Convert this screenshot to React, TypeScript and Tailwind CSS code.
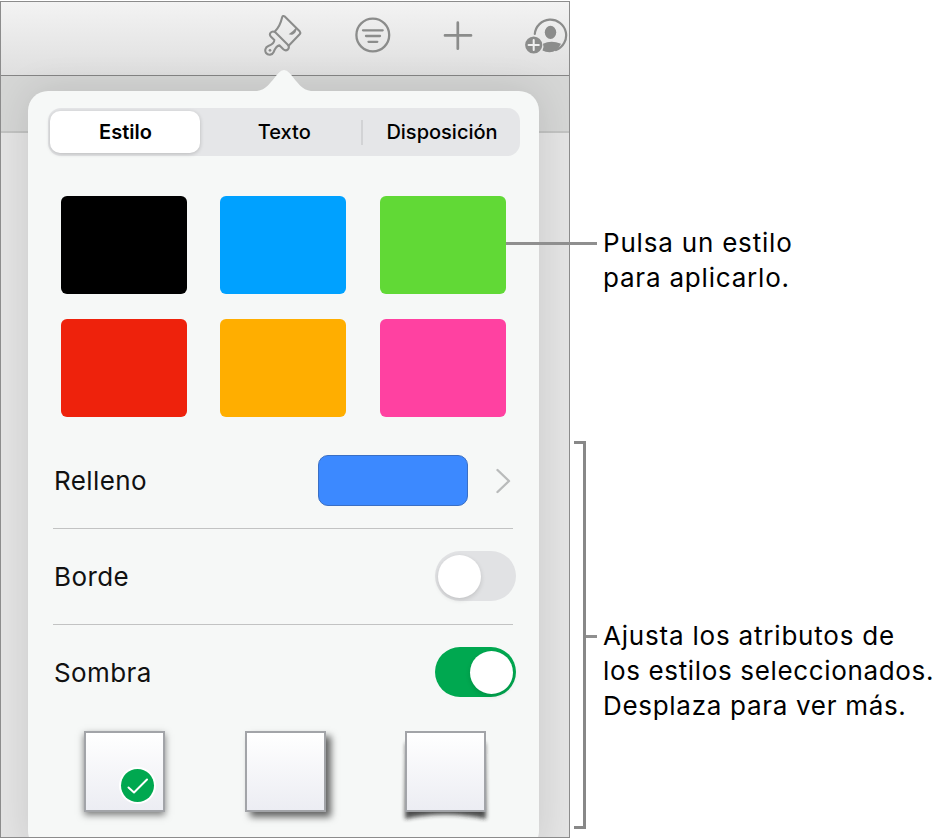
import type { ReactNode } from 'react';

const swatches = ['bg-black', 'bg-[#00a1ff]', 'bg-[#61d936]', 'bg-[#ee220c]', 'bg-[#ffae00]', 'bg-[#ff41a1]'];

function BrushIcon() {
  return (
    <svg className="ml-[262px] mt-[12px] h-[42px] w-[40px] shrink-0" viewBox="70 40 120 126" fill="none" stroke="#8b8c8b" strokeWidth="6.2" strokeLinecap="round" strokeLinejoin="round">
      <path d="M105 93C118 80 124 65 127 51Q129 43 136 48L180 92Q184 97 180 101L147 135" />
      <path d="M106 94L146 134" />
      <path d="M106 94Q98 90 93 96Q88 102 94 108L104 118C104 126 96 132 86 136C76 140 75 151 79 157C86 165 98 163 102 154C106 144 112 136 119 134L131 146Q138 152 144 147Q150 141 146 134" />
      <path d="M171 79Q162 90 147 101C160 106 172 97 171 79Z" fill="#8b8c8b" stroke="none" />
      <circle cx="91" cy="149" r="4" fill="#8b8c8b" stroke="none" />
    </svg>
  );
}

function Toolbar() {
  return (
    <div className="flex h-[74px] shrink-0 border-b border-[#858585] bg-linear-to-b from-[#f3f3f3] to-[#dfdfdf]">
      <BrushIcon />
      <svg className="ml-[52px] mt-[15px] size-[36px] shrink-0" viewBox="0 0 36 36" fill="none" stroke="#8b8c8b" strokeWidth="2.3" strokeLinecap="round">
        <circle cx="17.8" cy="18" r="16.4" />
        <path d="M8 13.3H27.7M11 19H25M13.5 24.8H22.3" />
      </svg>
      <svg className="ml-[52px] mt-[19px] size-[30px] shrink-0" viewBox="0 0 30 30" fill="none" stroke="#8b8c8b" strokeWidth="2.7" strokeLinecap="round">
        <path d="M14.8 1.7V27.7M2 14.4H28" />
      </svg>
      <svg className="ml-[51px] mt-[14px] h-[40px] w-[44px] shrink-0" viewBox="0 0 44 40">
        <path d="M10.8 18A15.7 15.7 0 1 1 32 34" fill="none" stroke="#8b8c8b" strokeWidth="2.2" strokeLinecap="round" />
        <ellipse cx="26.5" cy="16.3" rx="5.7" ry="6.6" fill="#8b8c8b" />
        <path d="M18.5 34.5Q20.3 31 19 27.8Q27 23.8 37 27.7Q33 36.3 25.5 36.3Q21.5 36 18.5 34.5Z" fill="#8b8c8b" />
        <circle cx="9.7" cy="29" r="8.6" fill="#8b8c8b" />
        <path d="M9.7 23.9V34.1M4.6 29H14.8" stroke="#f0f0f0" strokeWidth="2" strokeLinecap="round" />
      </svg>
    </div>
  );
}

function Tabs() {
  return (
    <div className="ml-[20px] mr-[19px] mt-[17px] flex h-[48px] items-center rounded-[13px] bg-[#e5e6e8] p-[2px] text-[20px] text-black">
      <div className="flex h-[42px] w-[150px] items-center justify-center rounded-[10px] bg-white pl-px font-semibold shadow-[0_1px_4px_rgba(0,0,0,0.2)]">Estilo</div>
      <div className="flex flex-1 justify-center pl-[8px] font-medium">Texto</div>
      <div className="h-[25px] w-[2px] bg-[#d2d3d5]" />
      <div className="flex w-[155px] justify-center pl-[4px] font-medium">Disposición</div>
    </div>
  );
}

function Row({ label, last, children }: { label: string; last?: boolean; children: ReactNode }) {
  return (
    <div className={`ml-[25px] mr-[26px] flex items-center justify-between ${last ? 'h-[94px]' : 'h-[96px] border-b border-[#c2c3c3]'}`}>
      <span className="pl-px text-[26px] tracking-[0.4px] text-[#111]">{label}</span>
      {children}
    </div>
  );
}

function Toggle({ on }: { on?: boolean }) {
  return (
    <div className={`-mr-[3px] flex h-[50px] w-[81px] items-center rounded-full px-[3px] ${on ? 'justify-end bg-[#00a850]' : '-mt-px bg-[#e1e2e4]'}`}>
      <div className="size-[43px] rounded-full bg-white shadow-[0_2px_5px_rgba(0,0,0,0.14)]" />
    </div>
  );
}

const tile = 'size-[81px] border-2 border-[#a2a4a8] bg-linear-to-b from-white to-[#ecedf3]';

function Shadows() {
  return (
    <div className="ml-[56px] mt-[12px] flex gap-[79.5px]">
      <div className={`${tile} flex items-end justify-end pb-[8px] pr-[9px] shadow-[0_3px_7px_rgba(0,0,0,0.5)]`}>
        <div className="flex size-[33px] shrink-0 items-center justify-center rounded-full bg-[#00a850] ring-2 ring-white">
          <svg className="size-[22px]" viewBox="0 0 22 22" fill="none" stroke="white" strokeWidth="2" strokeLinecap="round" strokeLinejoin="round">
            <path d="M1.5 12.5L7 17.5L20 4.5" />
          </svg>
        </div>
      </div>
      <div className={`${tile} shadow-[5px_5px_7px_rgba(0,0,0,0.6)]`} />
      <div className="relative">
        <svg className="absolute -left-[10px] -top-[6px] h-[104px] w-[101px]" viewBox="0 0 101 104">
          <defs>
            <filter id="curl" x="-20%" y="-20%" width="140%" height="140%"><feGaussianBlur stdDeviation="2" /></filter>
          </defs>
          <path d="M11 18H90L91 94Q50 85 10 94Z" fill="#222" opacity=".8" filter="url(#curl)" />
        </svg>
        <div className={`${tile} relative`} />
      </div>
    </div>
  );
}

function Popover() {
  return (
    <div className="absolute left-[27px] top-[89px] flex h-[760px] w-[510.5px] flex-col rounded-[20px] bg-[#f6f8f7] shadow-[0_0_38px_rgba(0,0,0,0.12)]">
      <svg className="absolute left-[229px] -top-[21px] h-[22px] w-[54px]" viewBox="0 0 54 22">
        <path d="M0 22V21C9 20 13 13 21.5 3Q27 -3 32.5 3C41 13 45 20 54 21V22Z" fill="#f6f8f7" />
      </svg>
      <Tabs />
      <div className="ml-[32.5px] mt-[40px] grid w-[445px] grid-cols-3 gap-x-[33.5px] gap-y-[25px]">
        {swatches.map((c) => <div key={c} className={`h-[98px] rounded-[6px] ${c}`} />)}
      </div>
      <div className="mt-[16px]">
        <Row label="Relleno">
          <div className="flex items-center gap-[27px]">
            <div className="h-[51px] w-[150px] rounded-[10px] border border-[#3a6fc4] bg-[#3c89ff]" />
            <svg className="mr-px h-[26px] w-[17px]" viewBox="0 0 17 26" fill="none" stroke="#b9bbbb" strokeWidth="2.4" strokeLinecap="round" strokeLinejoin="round">
              <path d="M2.5 2L14 13L2.5 24" />
            </svg>
          </div>
        </Row>
        <Row label="Borde"><Toggle /></Row>
        <Row label="Sombra" last><Toggle on /></Row>
      </div>
      <Shadows />
    </div>
  );
}

export default function App() {
  return (
    <div className="relative flex h-[838px] w-[944px] overflow-hidden bg-white font-['Inter','Liberation_Sans',sans-serif]">
      <div className="relative mt-px flex h-[837px] w-[570px] shrink-0 flex-col overflow-hidden border border-[#8c8c8c] bg-[#e4e4e4]">
        <Toolbar />
        <div className="h-[57px] shrink-0 border-b-2 border-[#c2c3c2] bg-[#d5d6d5]" />
        <Popover />
      </div>
      <div className="flex w-[27px] shrink-0 flex-col pl-[4px] pt-[441px]">
        <div className="flex h-[388px] items-center">
          <div className="h-full w-[12px] border-y-[3px] border-r-[3px] border-[#888]" />
          <div className="mt-[3px] h-[3px] w-[11px] bg-[#8f8f8f]" />
        </div>
      </div>
      <div className="flex flex-col whitespace-nowrap pl-[6px] pt-[225px] text-[26px] leading-[35px] text-black">
        <p className="tracking-[0.8px]">Pulsa un estilo<br />para aplicarlo.</p>
        <p className="mt-[323px] tracking-[0.7px]"><span className="tracking-[0.8px]">Ajusta los atributos de</span><br /><span className="tracking-[0.65px]">los estilos seleccionados.</span><br />Desplaza para ver más.</p>
      </div>
      <div className="absolute left-[506px] top-[242px] h-[3px] w-[91px] bg-[#8f8f8f]" />
    </div>
  );
}
